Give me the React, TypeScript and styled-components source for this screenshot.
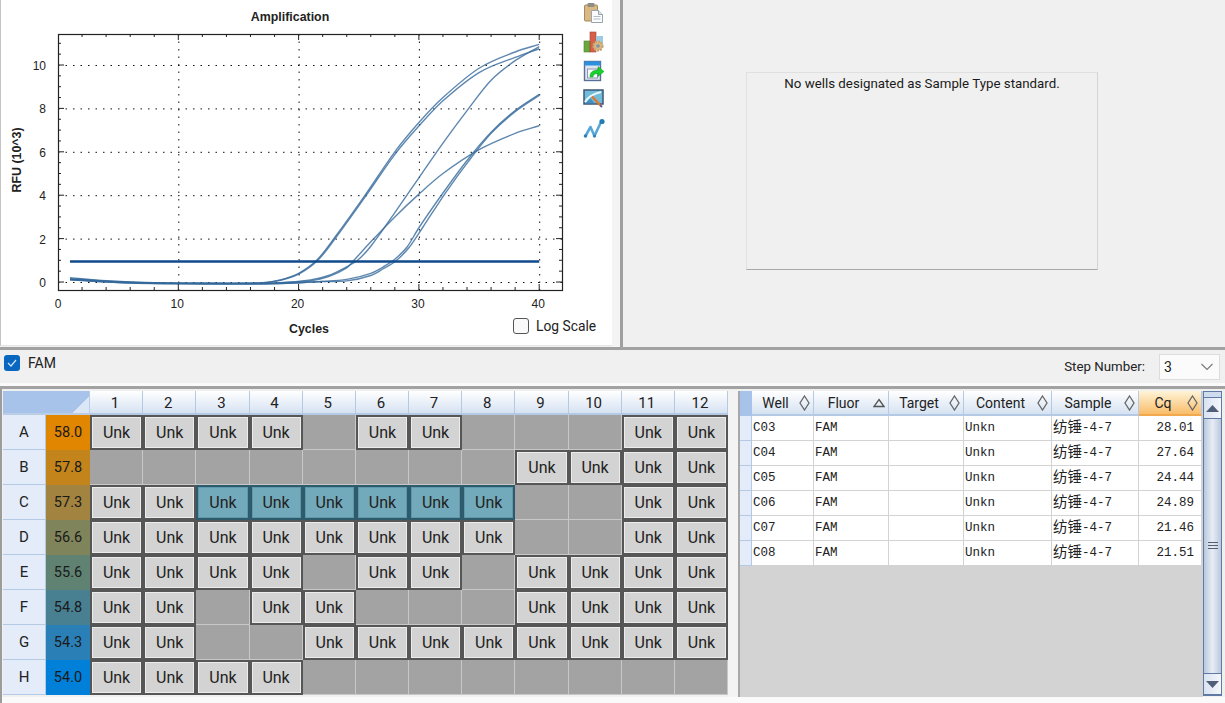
import styled, { createGlobalStyle } from 'styled-components';

const GlobalStyle = createGlobalStyle`
	html, body {
		margin: 0;
		padding: 0;
		background: #f0f0f0;
		overflow: hidden;
	}
	* {
		box-sizing: border-box;
	}
`;

const UI_FONT = `Roboto, 'Noto Sans', sans-serif`;

type Point = [number, number];

const toX = (cycle: number) => 58 + cycle * 12.03;
const toY = (rfu: number) => 282 - rfu * 21.7;

const CURVES: Point[][] = [
	[[1, 0.2], [4, 0.06], [8, -0.03], [14, -0.06], [17, -0.03], [18.5, 0.1], [20, 0.4], [21.5, 1], [23, 2.05], [25.4, 3.9], [28, 6], [30, 7.35], [32, 8.5], [35, 9.85], [38, 10.6], [40, 10.95]],
	[[1, 0.15], [4, 0.04], [8, -0.04], [14, -0.07], [17, -0.05], [18.5, 0.08], [20, 0.36], [21.6, 1], [23.1, 2.05], [25.5, 3.9], [28.1, 5.95], [30.1, 7.25], [32, 8.35], [35, 9.65], [38, 10.35], [40, 10.75]],
	[[1, 0.12], [6, -0.03], [12, -0.07], [18, -0.05], [21, 0.1], [22.5, 0.3], [24, 0.7], [24.9, 1], [26, 1.65], [28, 3.2], [30, 4.8], [32, 6.4], [34, 7.9], [36, 9.3], [38, 10.2], [40, 10.85]],
	[[1, 0.14], [6, -0.02], [12, -0.06], [18, -0.04], [21, 0.06], [22.5, 0.25], [24, 0.65], [24.6, 1], [26, 1.85], [28, 3], [30, 4.05], [32, 5], [35, 6.1], [38, 6.85], [40, 7.2]],
	[[1, 0.1], [6, -0.04], [12, -0.08], [18, -0.07], [22, 0.03], [24, 0.12], [26, 0.4], [27.2, 0.75], [28, 1.05], [29, 1.6], [30, 2.5], [32, 4.1], [34, 5.6], [36, 6.9], [38, 7.9], [40, 8.65]],
	[[1, 0.1], [6, -0.05], [12, -0.09], [18, -0.08], [22, 0.02], [24, 0.05], [26, 0.3], [27, 0.6], [28.1, 0.98], [29.2, 1.6], [30.3, 2.5], [32.2, 4.1], [34.1, 5.55], [36, 6.85], [38, 7.85], [40, 8.6]],
];

// cubic hermite through the points, slope taken from the neighbours
function smoothPath(points: Point[]) {
	const pts = points.map(([c, r]) => [toX(c), toY(r)]);
	const slope = (i: number) => {
		const a = pts[Math.max(i - 1, 0)];
		const b = pts[Math.min(i + 1, pts.length - 1)];
		return (b[1] - a[1]) / (b[0] - a[0]);
	};
	let d = `M${pts[0][0]} ${pts[0][1]}`;
	for (let i = 0; i < pts.length - 1; i++) {
		const p1 = pts[i];
		const p2 = pts[i + 1];
		const dx = (p2[0] - p1[0]) / 3;
		d += ` C${p1[0] + dx} ${p1[1] + slope(i) * dx} ${p2[0] - dx} ${p2[1] - slope(i + 1) * dx} ${p2[0]} ${p2[1]}`;
	}
	return d;
}

const range = (from: number, to: number, step: number) => {
	const out: number[] = [];
	for (let v = from; v <= to + 0.001; v += step) out.push(v);
	return out;
};

function AmplificationChart() {
	const left = 58;
	const right = 562;
	const top = 34;
	const bottom = 290;
	return (
		<ChartSvg width={580} height={345} viewBox="0 0 580 345">
			<ChartTitle x={290} y={21} textAnchor="middle">
				Amplification
			</ChartTitle>
			{[10, 20, 30, 40].map((c) => (
				<line key={c} x1={toX(c) + 0.5} x2={toX(c) + 0.5} y1={top} y2={bottom} stroke="#111" strokeDasharray="1.5 6" />
			))}
			{[0, 2, 4, 6, 8, 10].map((r) => (
				<line key={r} x1={left} x2={right} y1={toY(r) + 0.5} y2={toY(r) + 0.5} stroke="#111" strokeDasharray="1.5 6" />
			))}
			{CURVES.map((pts, i) => (
				<path key={i} d={smoothPath(pts)} fill="none" stroke="#35699b" strokeOpacity={0.8} strokeWidth={1.4} />
			))}
			<line x1={toX(1)} x2={toX(40)} y1={261.5} y2={261.5} stroke="#0f4a8a" strokeWidth={2.4} />
			<rect x={left + 0.5} y={top + 0.5} width={right - left} height={bottom - top} fill="none" stroke="#222" strokeWidth={1.2} />
			{range(2, 40, 2).map((c) => (
				<g key={c}>
					<line x1={toX(c)} x2={toX(c)} y1={bottom} y2={bottom - (c % 10 === 0 ? 6 : 3)} stroke="#222" />
					<line x1={toX(c)} x2={toX(c)} y1={top} y2={top + (c % 10 === 0 ? 6 : 3)} stroke="#222" />
				</g>
			))}
			{range(0, 11, 0.5).map((r) => (
				<g key={r}>
					<line x1={left} x2={left + (r % 2 === 0 ? 6 : 3)} y1={toY(r)} y2={toY(r)} stroke="#222" />
					<line x1={right} x2={right - (r % 2 === 0 ? 6 : 3)} y1={toY(r)} y2={toY(r)} stroke="#222" />
				</g>
			))}
			{[0, 10, 20, 30, 40].map((c) => (
				<TickLabel key={c} x={toX(c) - (c === 0 ? 0 : 1)} y={308} textAnchor="middle">
					{c}
				</TickLabel>
			))}
			{[0, 2, 4, 6, 8, 10].map((r) => (
				<TickLabel key={r} x={46} y={toY(r) + 5} textAnchor="end">
					{r}
				</TickLabel>
			))}
			<AxisLabel x={309} y={333} textAnchor="middle">
				Cycles
			</AxisLabel>
			<AxisLabel x={0} y={0} textAnchor="middle" transform="translate(21 160) rotate(-90)">
				RFU (10^3)
			</AxisLabel>
		</ChartSvg>
	);
}

function ClipboardIcon() {
	return (
		<svg width={22} height={22} viewBox="0 0 22 22">
			<rect x="1.5" y="3" width="13" height="16" rx="1" fill="#d9b883" stroke="#a58b5f" />
			<rect x="4.5" y="1" width="7" height="4" rx="1" fill="#8d8d86" />
			<path d="M8.5 8.5h7l4 4v8h-11z" fill="#fafcff" stroke="#9aa4ad" />
			<path d="M15.5 8.5v4h4" fill="#dbe3ea" stroke="#9aa4ad" />
			<path d="M10.5 14.5h7M10.5 17h7" stroke="#b3bcc5" />
		</svg>
	);
}

function ChartGearIcon() {
	return (
		<svg width={22} height={22} viewBox="0 0 22 22">
			<rect x="1" y="10" width="6" height="11" fill="#69a83c" stroke="#4e7f2c" strokeWidth="0.6" />
			<rect x="7" y="1" width="6" height="20" fill="#d5604a" stroke="#a8432f" strokeWidth="0.6" />
			<rect x="13" y="5" width="7" height="9" fill="#9ccbe3" />
			<circle cx="15" cy="15" r="4.6" fill="#d9b77e" stroke="#c5a473" strokeWidth="2" strokeDasharray="2 1" />
			<circle cx="15" cy="15" r="1.8" fill="#7a93a6" />
		</svg>
	);
}

function ExportIcon() {
	return (
		<svg width={22} height={22} viewBox="0 0 22 22">
			<rect x="1.5" y="1.5" width="16" height="19" fill="#dfe5ee" stroke="#5a6f95" strokeWidth="1.4" />
			<rect x="1.5" y="1.5" width="16" height="4" fill="#2c90e0" />
			<rect x="4.5" y="9" width="10" height="9" fill="#f5f7fa" stroke="#8a97ad" />
			<path d="M7 17c0-5 3-7 8-7V6.500l6 5-6 5v-3c-3 0-5 1-5 3.500z" fill="#17d12e" stroke="#0c9a1e" strokeWidth="0.5" />
		</svg>
	);
}

function PictureEditIcon() {
	return (
		<svg width={22} height={22} viewBox="0 0 22 22">
			<rect x="1" y="1" width="19" height="14" fill="#70bcd9" stroke="#3f5578" strokeWidth="1.5" />
			<path d="M2 13c3-5 7-8 16-10" fill="none" stroke="#eaf6fb" strokeWidth="2" />
			<path d="M2.500 14.300l5-5 4 5z" fill="#3f8fc0" />
			<path d="M9 7.500l8 8.500" stroke="#e2752d" strokeWidth="2.4" />
			<path d="M17 16l2 2" stroke="#6a5a80" strokeWidth="2.2" />
		</svg>
	);
}

function TraceIcon() {
	return (
		<svg width={22} height={22} viewBox="0 0 22 22">
			<path d="M2.500 18l5-9 4 9 6-13" fill="none" stroke="#58a7d8" strokeWidth="2.6" strokeLinejoin="round" />
			<circle cx="2.500" cy="18" r="1.800" fill="#2f7fb8" />
			<circle cx="11.500" cy="18" r="1.600" fill="#2f7fb8" />
			<circle cx="19" cy="3.500" r="2.600" fill="#1f7fb5" />
		</svg>
	);
}

const ROW_LABELS = ['A', 'B', 'C', 'D', 'E', 'F', 'G', 'H'];

const TEMPERATURES = [
	{ value: '58.0', color: '#e08600' },
	{ value: '57.8', color: '#c3851b' },
	{ value: '57.3', color: '#a2833f' },
	{ value: '56.6', color: '#80845a' },
	{ value: '55.6', color: '#5f8273' },
	{ value: '54.8', color: '#488092' },
	{ value: '54.3', color: '#2a80b6' },
	{ value: '54.0', color: '#0080d8' },
];

const PLATE: number[][] = [
	[1, 2, 3, 4, 6, 7, 11, 12],
	[9, 10, 11, 12],
	[1, 2, 3, 4, 5, 6, 7, 8, 11, 12],
	[1, 2, 3, 4, 5, 6, 7, 8, 11, 12],
	[1, 2, 3, 4, 6, 7, 9, 10, 11, 12],
	[1, 2, 4, 5, 9, 10, 11, 12],
	[1, 2, 5, 6, 7, 8, 9, 10, 11, 12],
	[1, 2, 3, 4],
];

const COLUMNS = [1, 2, 3, 4, 5, 6, 7, 8, 9, 10, 11, 12];

const TABLE_HEAD = [
	{ label: 'Well', sort: 'both' },
	{ label: 'Fluor', sort: 'up' },
	{ label: 'Target', sort: 'both' },
	{ label: 'Content', sort: 'both' },
	{ label: 'Sample', sort: 'both' },
	{ label: 'Cq', sort: 'both', active: true },
];

const TABLE_ROWS = [
	['C03', '28.01'],
	['C04', '27.64'],
	['C05', '24.44'],
	['C06', '24.89'],
	['C07', '21.46'],
	['C08', '21.51'],
];

function SortMark({ kind }: { kind: string }) {
	if (kind === 'up') {
		return (
			<SortSvg width={12} height={10} viewBox="0 0 12 10">
				<path d="M6 1.500L11 8.500H1z" fill="none" stroke="#555" strokeWidth="1.3" />
			</SortSvg>
		);
	}
	return (
		<SortSvg width={11} height={16} viewBox="0 0 11 16">
			<path d="M5.500 1l4.500 7-4.500 7-4.500-7z" fill="none" stroke="#666" strokeWidth="1.300" />
		</SortSvg>
	);
}

export default function App() {
	return (
		<>
			<GlobalStyle />
			<Page>
				<TopPane>
					<ChartPanel>
						<AmplificationChart />
						<IconRail>
							<ClipboardIcon />
							<ChartGearIcon />
							<ExportIcon />
							<PictureEditIcon />
							<TraceIcon />
						</IconRail>
						<LogScale>
							<LogBox />
							Log Scale
						</LogScale>
					</ChartPanel>
					<VerticalSplit />
					<StandardPanel>
						<StandardBox>No wells designated as Sample Type standard.</StandardBox>
					</StandardPanel>
				</TopPane>
				<FluorBar>
					<FluorLabel>
						<FluorCheck>
							<svg width={10} height={8} viewBox="0 0 10 8">
								<path d="M1 4l3 3 5-6" fill="none" stroke="#cfe4f7" strokeWidth="1.2" />
							</svg>
						</FluorCheck>
						FAM
					</FluorLabel>
					<StepLabel>Step Number:</StepLabel>
					<StepSelect>
						3
						<svg width={14} height={8} viewBox="0 0 14 8">
							<path d="M1.5 1l5.500 5.500L12.500 1" fill="none" stroke="#777" strokeWidth="1.1" />
						</svg>
					</StepSelect>
				</FluorBar>
				<BottomPane>
					<Plate>
						<PlateCorner />
						{COLUMNS.map((c) => (
							<ColumnHead key={c}>{c}</ColumnHead>
						))}
						{ROW_LABELS.map((row, r) => (
							<PlateRow key={row}>
								<RowHead>{row}</RowHead>
								<TempCell $color={TEMPERATURES[r].color}>{TEMPERATURES[r].value}</TempCell>
								{COLUMNS.map((c) =>
									PLATE[r].includes(c) ? (
										<Well key={c} $selected={row === 'C' && c >= 3 && c <= 8}>
											Unk
										</Well>
									) : (
										<EmptyWell key={c} />
									),
								)}
							</PlateRow>
						))}
					</Plate>
					<MiddleSplit />
					<TablePane>
						<DataTable>
							<HeadRow>
								<MarkerHead />
								{TABLE_HEAD.map((h) => (
									<HeadCell key={h.label} $active={h.active}>
										<HeadLabel>{h.label}</HeadLabel>
										<SortMark kind={h.sort} />
									</HeadCell>
								))}
							</HeadRow>
							{TABLE_ROWS.map(([well, cq]) => (
								<BodyRow key={well}>
									<RowMarker />
									<Cell>{well}</Cell>
									<Cell>FAM</Cell>
									<Cell />
									<Cell>Unkn</Cell>
									<Cell>
										<CjkName>纺锤</CjkName>-4-7
									</Cell>
									<Cell $right>{cq}</Cell>
								</BodyRow>
							))}
						</DataTable>
						<ScrollBar>
							<ScrollSplit />
							<ScrollButton>
								<svg width={13} height={7} viewBox="0 0 13 7">
									<path d="M6.500 0L13 7H0z" fill="#4f5f78" />
								</svg>
							</ScrollButton>
							<ScrollThumb>
								<Grip />
							</ScrollThumb>
							<ScrollButton>
								<svg width={13} height={7} viewBox="0 0 13 7">
									<path d="M0 0h13L6.500 7z" fill="#4f5f78" />
								</svg>
							</ScrollButton>
						</ScrollBar>
					</TablePane>
				</BottomPane>
			</Page>
		</>
	);
}

const Page = styled.div`
	display: flex;
	flex-direction: column;
	width: 1225px;
	height: 703px;
	overflow: hidden;
	background: #f0f0f0;
	font-family: ${UI_FONT};
	color: #111;
`;

const TopPane = styled.div`
	display: flex;
	height: 350px;
	flex-shrink: 0;
	border-bottom: 3px solid #a2a2a2;
`;

const ChartPanel = styled.div`
	position: relative;
	display: flex;
	width: 612px;
	height: 346px;
	background: #fff;
	border-left: 1px solid #c4c4c4;
	border-bottom: 1px solid #e6e6e6;
`;

const ChartSvg = styled.svg`
	display: block;
	margin-left: -1px;
	flex-shrink: 0;
`;

const ChartTitle = styled.text`
	font: bold 12.4px 'Liberation Sans', sans-serif;
	fill: #222;
`;

const TickLabel = styled.text`
	font: 12px 'Liberation Sans', sans-serif;
	fill: #222;
`;

const AxisLabel = styled.text`
	font: bold 12.4px 'Liberation Sans', sans-serif;
	fill: #222;
`;

const IconRail = styled.div`
	display: flex;
	flex-direction: column;
	gap: 7px;
	padding: 2px 0 0 3px;
`;

const LogScale = styled.label`
	position: absolute;
	left: 512px;
	top: 316px;
	display: flex;
	align-items: center;
	gap: 7px;
	font-size: 13.8px;
	line-height: 20px;
	color: #222;
`;

const LogBox = styled.span`
	display: block;
	width: 16px;
	height: 16px;
	background: #fafafa;
	border: 1px solid #555;
	border-radius: 3px;
`;

const VerticalSplit = styled.div`
	width: 11px;
	flex-shrink: 0;
	background: #f4f4f4;
	border-right: 3px solid #9f9f9f;
`;

const StandardPanel = styled.div`
	flex: 1;
	padding: 72px 0 0 123px;
`;

const StandardBox = styled.div`
	width: 352px;
	height: 198px;
	padding-top: 1px;
	text-align: center;
	font-size: 13.3px;
	line-height: 20px;
	background: #f0f0f0;
	border: 1px solid #e0e0e0;
	border-bottom: 1px solid #a8a8a8;
	border-right-color: #d4d4d4;
	color: #1a1a1a;
`;

const FluorBar = styled.div`
	display: flex;
	align-items: center;
	height: 39px;
	flex-shrink: 0;
	padding: 0 5px 3px 4px;
	font-size: 13.3px;
	color: #222;
	border-bottom: 3px solid #a2a2a2;
	box-shadow: inset 0 -3px 0 #fafafa;
`;

const FluorLabel = styled.div`
	display: flex;
	align-items: center;
	margin-bottom: 7px;
	font-size: 14px;
`;

const FluorCheck = styled.span`
	display: flex;
	align-items: center;
	justify-content: center;
	width: 16px;
	height: 16px;
	margin-right: 8px;
	border-radius: 3px;
	background: #0a67c0;
`;

const StepLabel = styled.span`
	margin-left: auto;
	margin-right: 14px;
`;

const StepSelect = styled.div`
	display: flex;
	align-items: center;
	justify-content: space-between;
	width: 61px;
	height: 26px;
	padding: 0 5px 0 4px;
	font-size: 14px;
	background: #fbfbfb;
	border: 1px solid #dcdcdc;
`;

const BottomPane = styled.div`
	display: flex;
	height: 314px;
	padding: 2px 0 6px 3px;
	border-left: 1px solid transparent;
	margin-left: -1px;
	box-shadow: inset 2px 0 0 #9c9c9c;
	background: linear-gradient(#f0f0f0 0 308px, #fafafa 308px);
`;

const Plate = styled.div`
	display: grid;
	grid-template-columns: 43px 44px repeat(12, 1fr);
	grid-template-rows: 24px repeat(8, 35px);
	width: 725px;
	height: 304px;
	flex-shrink: 0;
	background: #c8c8c8;
`;

const PlateCorner = styled.div`
	grid-column: span 2;
	background: linear-gradient(135deg, #a7c3e9 85%, #dbe7f6 85%);
	border-right: 1px solid #b9cde6;
	border-bottom: 2px solid #b9cde6;
`;

const ColumnHead = styled.div`
	display: flex;
	align-items: center;
	justify-content: center;
	padding: 1px 2px 0 0;
	font-size: 15px;
	color: #222;
	background: linear-gradient(#ffffff, #d6e2f2);
	border-right: 1px solid #b4c9e3;
	border-bottom: 2px solid #b4c9e3;
`;

const PlateRow = styled.div`
	display: contents;
`;

const RowHead = styled.div`
	display: flex;
	align-items: center;
	justify-content: center;
	font-size: 15px;
	color: #222;
	background: #e3ecf8;
	border-bottom: 1px solid #b4c9e3;
	border-right: 1px solid #b4c9e3;
`;

const TempCell = styled.div<{ $color: string }>`
	display: flex;
	align-items: center;
	justify-content: center;
	font-size: 14.5px;
	color: #1a1a1a;
	background: ${(p) => p.$color};
`;

const Well = styled.div<{ $selected?: boolean }>`
	display: flex;
	align-items: center;
	justify-content: center;
	padding-bottom: 1px;
	font-size: 16px;
	color: #222;
	background: ${(p) => (p.$selected ? '#72aabb' : '#d3d3d3')};
	border: 2px solid ${(p) => (p.$selected ? '#2d5b6b' : '#565656')};
	box-shadow: inset 0 0 0 1px ${(p) => (p.$selected ? '#5f98aa' : '#ececec')};
`;

const EmptyWell = styled.div`
	background: #a3a3a3;
	border-right: 1px solid #c8c8c8;
	border-bottom: 1px solid #c8c8c8;
`;

const MiddleSplit = styled.div`
	width: 12px;
	flex-shrink: 0;
	background: #f3f3f3;
	border-right: 2px solid #a8a8a8;
`;

const TablePane = styled.div`
	display: flex;
	width: 483px;
	height: 306px;
`;

const DataTable = styled.div`
	flex: 1;
	background: #d3d3d3;
	font-family: 'Liberation Mono', 'Noto Sans CJK SC', monospace;
	font-size: 12.5px;
`;

const TRACKS = '12px 62px 75px 75px 88px 87px 63px';

const HeadRow = styled.div`
	display: grid;
	grid-template-columns: ${TRACKS};
	height: 25px;
`;

const MarkerHead = styled.div`
	background: #a7c3e9;
`;

const HeadCell = styled.div<{ $active?: boolean }>`
	display: flex;
	align-items: center;
	padding: 0 3px 0 0;
	font-family: ${UI_FONT};
	font-size: 14px;
	color: #222;
	background: ${(p) => (p.$active ? 'linear-gradient(#fff4d8, #f9bd6a)' : 'linear-gradient(#ffffff, #d6e2f2)')};
	border-right: 1px solid #b4c9e3;
	border-bottom: 2px solid ${(p) => (p.$active ? '#f2a94e' : '#b4c9e3')};
`;

const HeadLabel = styled.span`
	flex: 1;
	text-align: center;
`;

const SortSvg = styled.svg`
	flex-shrink: 0;
`;

const BodyRow = styled.div`
	display: grid;
	grid-template-columns: ${TRACKS};
	height: 25px;
`;

const RowMarker = styled.div`
	background: #e3ecf8;
	border-bottom: 1px solid #b4c9e3;
	border-right: 1px solid #b4c9e3;
`;

const Cell = styled.div<{ $right?: boolean }>`
	display: flex;
	align-items: center;
	justify-content: ${(p) => (p.$right ? 'flex-end' : 'flex-start')};
	padding: ${(p) => (p.$right ? '0 7px 0 0' : '0 0 0 1px')};
	color: #222;
	background: #fff;
	border-right: 1px solid #d3d3d3;
	border-bottom: 1px solid #d3d3d3;
`;

const CjkName = styled.span`
	font-size: 14.5px;
	line-height: 1;
`;

const ScrollBar = styled.div`
	display: flex;
	flex-direction: column;
	width: 19px;
	height: 305px;
	margin: 0 1px 0 0;
	background: #f0f0f0;
	border: 1px solid #5f7aa5;
`;

const ScrollSplit = styled.div`
	height: 6px;
	background: #cfdcee;
	border-bottom: 1px solid #5f7aa5;
`;

const ScrollButton = styled.div`
	display: flex;
	align-items: center;
	justify-content: center;
	height: 21px;
	flex-shrink: 0;
	background: linear-gradient(90deg, #d9e3f1, #f4f7fb);
	border-bottom: 1px solid #5f7aa5;
`;

const ScrollThumb = styled.div`
	flex: 1;
	display: flex;
	align-items: center;
	justify-content: center;
	background: linear-gradient(90deg, #b9c8de, #e8edf5 50%, #b9c8de);
	border-bottom: 1px solid #5f7aa5;
`;

const Grip = styled.div`
	width: 10px;
	height: 8px;
	background: repeating-linear-gradient(#555f70 0 1px, transparent 1px 3px);
`;
